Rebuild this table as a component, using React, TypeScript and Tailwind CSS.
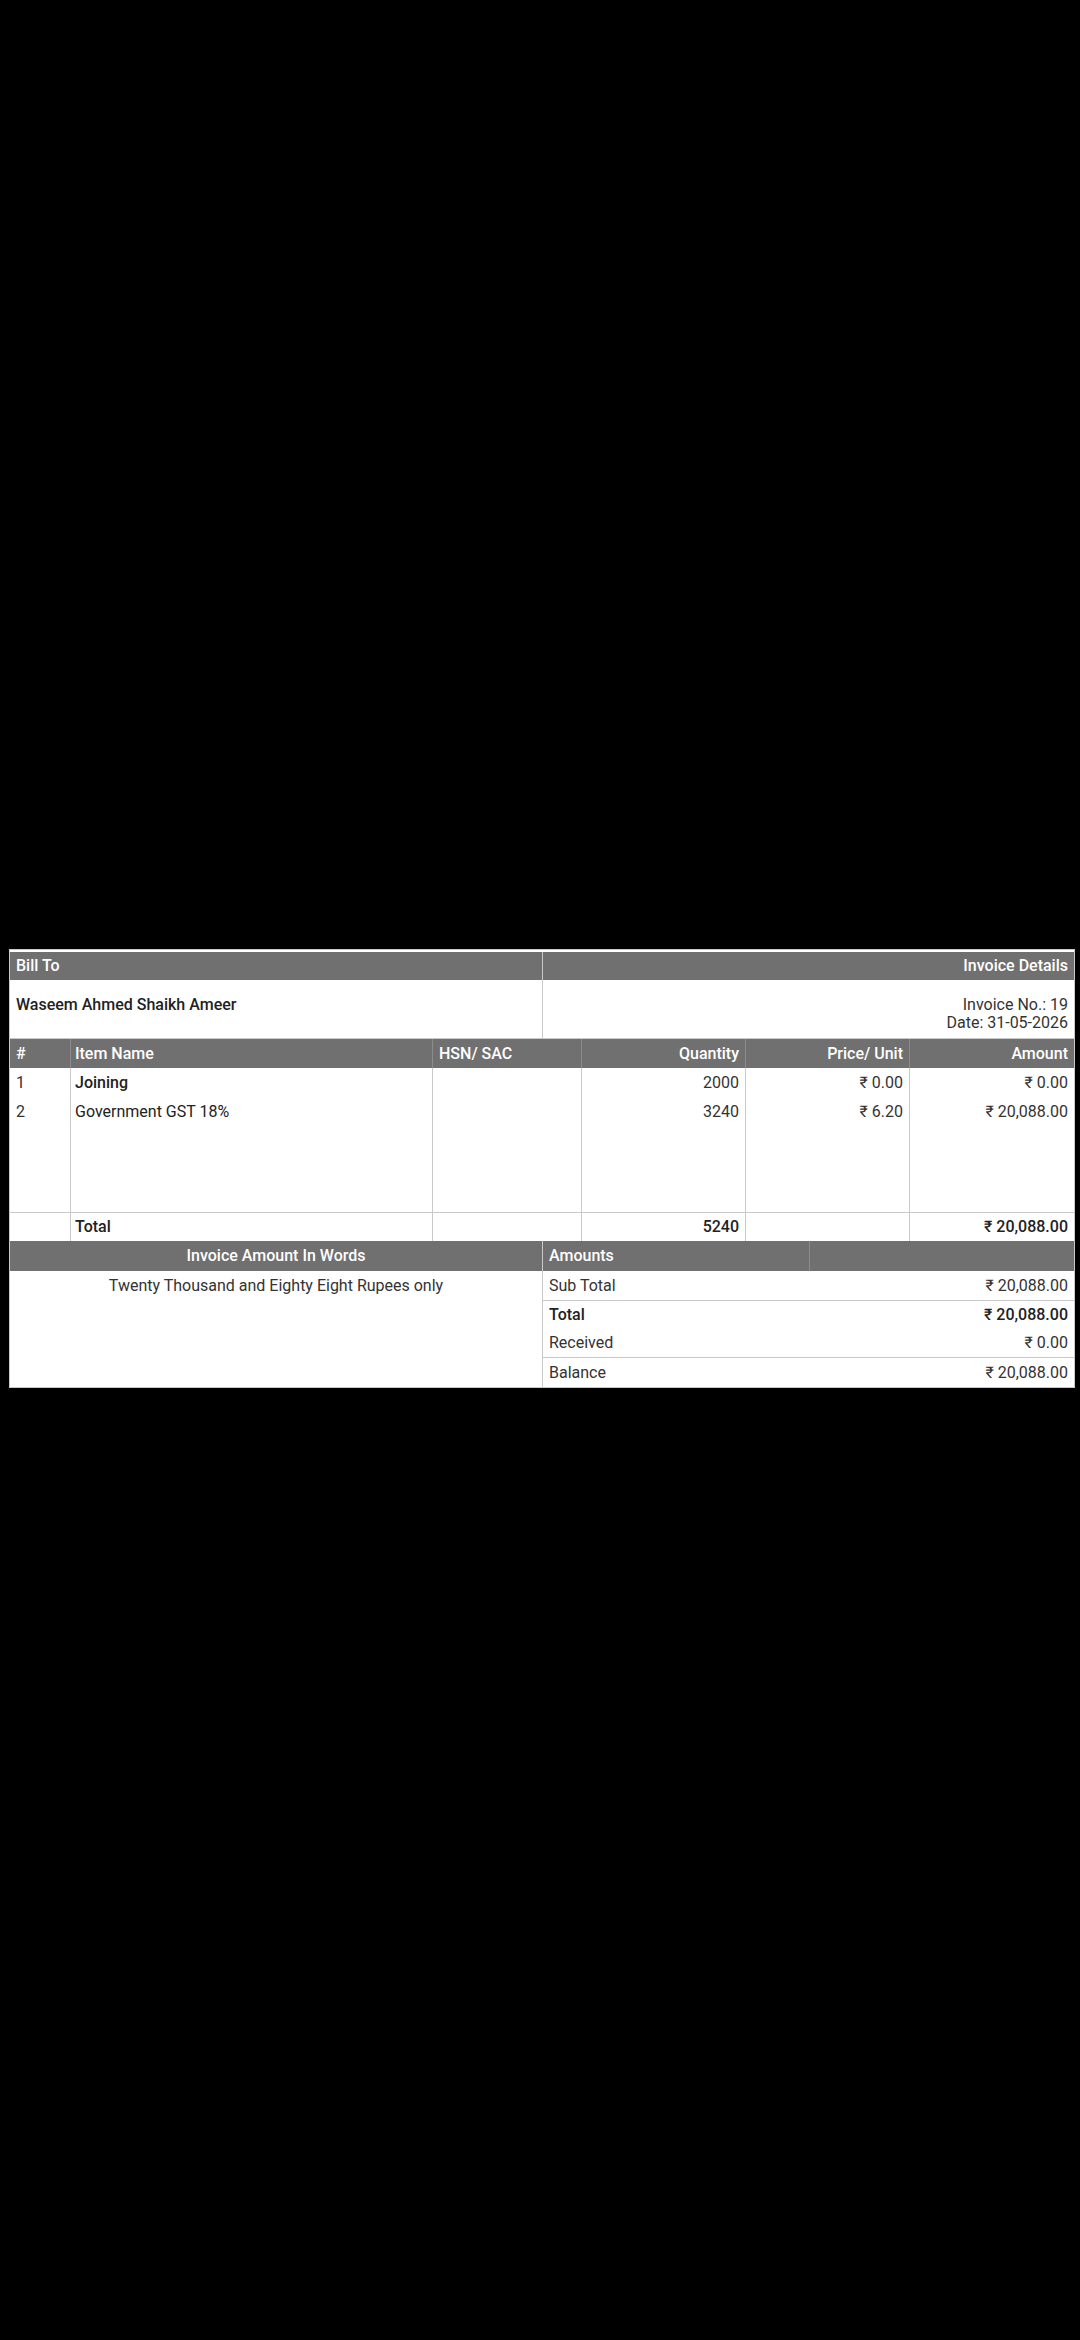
import React from "react"

const headCell = "h-full flex items-center px-[6px] text-white font-medium"
const line = "border-[#c9c9c9]"

interface Item {
  no: number
  name: string
  hsn: string
  qty: string
  price: string
  amount: string
}

const items: Item[] = [
  { no: 1, name: "Joining", hsn: "", qty: "2000", price: "₹ 0.00", amount: "₹ 0.00" },
  { no: 2, name: "Government GST 18%", hsn: "", qty: "3240", price: "₹ 6.20", amount: "₹ 20,088.00" },
]

const totals = [
  { label: "Sub Total", value: "₹ 20,088.00", h: "h-[30px]", bold: false, border: true },
  { label: "Total", value: "₹ 20,088.00", h: "h-[28px]", bold: true, border: false },
  { label: "Received", value: "₹ 0.00", h: "h-[29px]", bold: false, border: true },
  { label: "Balance", value: "₹ 20,088.00", h: "h-[29px]", bold: false, border: false },
]

export default function App() {
  return (
    <div
      className="w-[1080px] min-h-[2340px] bg-black pt-[949px]"
      style={{ fontFamily: "Roboto, 'Liberation Sans', sans-serif" }}
    >
      <div className={`ml-[9px] w-[1066px] bg-white border ${line} pt-[2px] text-[16px] text-[#222]`}>
        {/* Bill to / invoice details */}
        <div className="grid grid-cols-[532px_1fr]">
          <div className="flex flex-col">
            <div className="h-[28px] bg-[#707070]">
              <div className={headCell}>Bill To</div>
            </div>
            <div className="h-[58px] px-[6px] pt-[16px] leading-[18px] font-medium">
              Waseem Ahmed Shaikh Ameer
            </div>
          </div>
          <div className={`flex flex-col border-l ${line}`}>
            <div className="h-[28px] bg-[#707070]">
              <div className={`${headCell} justify-end`}>Invoice Details</div>
            </div>
            <div className="h-[58px] px-[6px] pt-[16px] leading-[18px] text-right text-[#333]">
              <div>Invoice No.: 19</div>
              <div>Date: 31-05-2026</div>
            </div>
          </div>
        </div>

        {/* Items */}
        <div className={`grid grid-cols-[60px_362px_149px_164px_164px_1fr] grid-rows-[29px_144px_29px] border-t ${line}`}>
          <div className="bg-[#707070]"><div className={headCell}>#</div></div>
          <div className="bg-[#707070] border-l border-[#8c8c8c]"><div className={`${headCell} pl-[4px]`}>Item Name</div></div>
          <div className="bg-[#707070] border-l border-[#8c8c8c]"><div className={headCell}>HSN/ SAC</div></div>
          <div className="bg-[#707070] border-l border-[#8c8c8c]"><div className={`${headCell} justify-end`}>Quantity</div></div>
          <div className="bg-[#707070] border-l border-[#8c8c8c]"><div className={`${headCell} justify-end`}>Price/ Unit</div></div>
          <div className="bg-[#707070] border-l border-[#8c8c8c]"><div className={`${headCell} justify-end`}>Amount</div></div>

          <div className="px-[6px] leading-[29px] text-[#333]">
            {items.map((it) => <div key={it.no}>{it.no}</div>)}
          </div>
          <div className={`border-l ${line} pl-[4px] pr-[6px] leading-[29px]`}>
            {items.map((it) => <div key={it.no} className={it.no === 1 ? "font-medium" : ""}>{it.name}</div>)}
          </div>
          <div className={`border-l ${line} px-[6px] leading-[29px]`}>
            {items.map((it) => <div key={it.no}>{it.hsn || "\u00a0"}</div>)}
          </div>
          <div className={`border-l ${line} px-[6px] leading-[29px] text-right text-[#333]`}>
            {items.map((it) => <div key={it.no}>{it.qty}</div>)}
          </div>
          <div className={`border-l ${line} px-[6px] leading-[29px] text-right text-[#333]`}>
            {items.map((it) => <div key={it.no}>{it.price}</div>)}
          </div>
          <div className={`border-l ${line} px-[6px] leading-[29px] text-right text-[#333]`}>
            {items.map((it) => <div key={it.no}>{it.amount}</div>)}
          </div>

          <div className={`border-t ${line}`} />
          <div className={`border-t border-l ${line} pl-[4px] pr-[6px] leading-[28px] font-medium`}>Total</div>
          <div className={`border-t border-l ${line}`} />
          <div className={`border-t border-l ${line} px-[6px] leading-[28px] text-right font-medium`}>5240</div>
          <div className={`border-t border-l ${line}`} />
          <div className={`border-t border-l ${line} px-[6px] leading-[28px] text-right font-medium`}>₹ 20,088.00</div>
        </div>

        {/* Amount in words / amounts */}
        <div className="grid grid-cols-[532px_1fr]">
          <div className="flex flex-col">
            <div className="h-[30px] bg-[#707070]">
              <div className={`${headCell} justify-center`}>Invoice Amount In Words</div>
            </div>
            <div className="px-[6px] leading-[30px] text-center text-[#333]">
              Twenty Thousand and Eighty Eight Rupees only
            </div>
          </div>
          <div className={`flex flex-col border-l ${line}`}>
            <div className="h-[30px] bg-[#707070] grid grid-cols-[266px_1fr]">
              <div className={headCell}>Amounts</div>
              <div className="border-l border-[#8c8c8c]" />
            </div>
            {totals.map((t) => (
              <div
                key={t.label}
                className={`${t.h} flex items-center justify-between px-[6px] ${t.border ? `border-b ${line}` : ""} ${t.bold ? "font-medium text-[#222]" : "text-[#333]"}`}
              >
                <span>{t.label}</span>
                <span>{t.value}</span>
              </div>
            ))}
          </div>
        </div>
      </div>
    </div>
  )
}
